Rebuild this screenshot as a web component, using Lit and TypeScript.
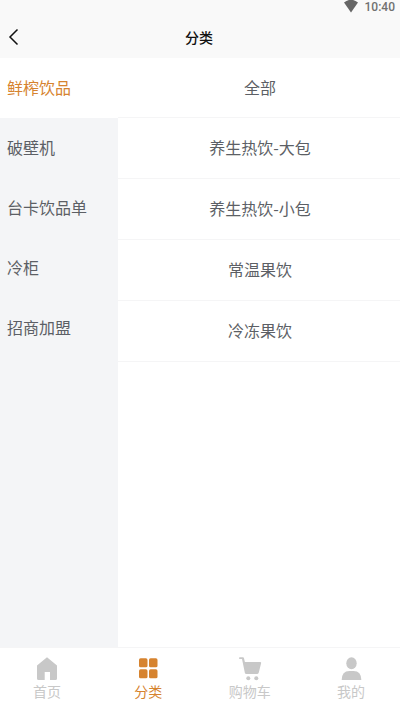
import { LitElement, html, css, svg } from "lit";
import { customElement, state } from "lit/decorators.js";
import { classMap } from "lit/directives/class-map.js";

const categories = [
  { name: "鲜榨饮品", items: ["全部", "养生热饮-大包", "养生热饮-小包", "常温果饮", "冷冻果饮"] },
  { name: "破壁机", items: ["全部"] },
  { name: "台卡饮品单", items: ["全部"] },
  { name: "冷柜", items: ["全部"] },
  { name: "招商加盟", items: ["全部"] },
];

const tabs = [
  {
    label: "首页",
    icon: svg`<path d="M12 0.3 L22 8.5 V21.5 Q22 23 20.5 23 H15 V15 H9.7 V23 H3.5 Q2 23 2 21.5 V8.5 Z"/>`,
  },
  {
    label: "分类",
    icon: svg`<rect x="3" y="1.3" width="8.5" height="9" rx="1.6"/><rect x="13" y="1.3" width="8.5" height="9" rx="1.6"/><rect x="3" y="12.3" width="8.5" height="9" rx="1.6"/><rect x="13" y="12.3" width="8.5" height="9" rx="1.6"/>`,
  },
  {
    label: "购物车",
    icon: svg`<path d="M1.8 0.3 H5 Q5.8 0.3 6 1.2 L6.9 5 H22.1 Q23.5 5 23.1 6.2 L20.8 15.6 Q20.5 17 19.3 17 H8.2 Q7.2 17 6.9 16 L4 2 H1.8 Q1 2 1 1.2 Q1 0.3 1.8 0.3 Z"/><circle cx="10.3" cy="21.2" r="2"/><circle cx="18.3" cy="21.2" r="2"/>`,
  },
  {
    label: "我的",
    icon: svg`<ellipse cx="12.5" cy="6.2" rx="5.2" ry="6"/><path d="M2.7 23 Q2.7 14 10.5 14 H14.5 Q22.3 14 22.3 23 Z"/>`,
  },
];

@customElement("app-root")
export class AppRoot extends LitElement {
  @state() private category = 0;
  @state() private tab = 1;

  static styles = css`
    :host {
      display: flex;
      flex-direction: column;
      min-height: 100vh;
      background: #fff;
      color: #5c5f65;
      font-family: "Noto Sans CJK SC", sans-serif;
      font-size: 16px;
    }
    button {
      border: 0;
      margin: 0;
      padding: 0;
      background: none;
      color: inherit;
      font: inherit;
      cursor: pointer;
    }
    .top {
      background: #f9f9f9;
    }
    .status {
      display: flex;
      justify-content: flex-end;
      align-items: flex-start;
      gap: 7px;
      height: 16px;
      padding-right: 5px;
      font: 500 12px/14px Roboto, sans-serif;
      color: #707070;
    }
    .wifi {
      width: 14px;
      height: 14px;
      fill: #666;
    }
    .bar {
      display: grid;
      grid-template-columns: 40px 1fr 40px;
      align-items: center;
      height: 42px;
      padding-right: 2px;
      color: #111;
    }
    .back {
      display: flex;
      align-items: center;
      height: 40px;
      padding-left: 8px;
    }
    .back svg {
      width: 12px;
      height: 18px;
      fill: none;
      stroke: #111;
      stroke-width: 1.5;
    }
    h1 {
      margin: 0;
      text-align: center;
      font-size: 14px;
      line-height: 20px;
      font-weight: 500;
    }
    .body {
      flex: 1;
      display: grid;
      grid-template-columns: 118px 1fr;
    }
    .side {
      display: flex;
      flex-direction: column;
      background: #f4f5f7;
    }
    .category {
      height: 60px;
      padding: 0 0 2px 7px;
      text-align: left;
    }
    .category.on {
      background: #fff;
      color: #d6832f;
    }
    .item {
      display: block;
      box-sizing: border-box;
      width: 100%;
      height: 61px;
      padding: 0 0 2px 2px;
      border-bottom: 1px solid #f5f5f6;
    }
    .item:first-child {
      height: 60px;
    }
    .tabs {
      display: flex;
      justify-content: space-between;
      box-sizing: border-box;
      height: 63px;
      padding: 9px 21px 0 19px;
      border-top: 1px solid #f5f5f6;
    }
    .tab {
      display: flex;
      flex-direction: column;
      align-items: center;
      width: 56px;
      font-size: 14px;
      line-height: 20px;
      color: #c8c8c8;
    }
    .tab svg {
      width: 24px;
      height: 24px;
      fill: currentColor;
    }
    .tab.on {
      color: #d6832f;
    }
  `;

  render() {
    return html`
      <header class="top">
        <div class="status">
          <svg class="wifi" viewBox="0 0 14 14" aria-hidden="true">
            <path d="M0 2.5 Q7 -3 14 2.5 L7 12.5 Z" />
          </svg>
          <span>10:40</span>
        </div>
        <div class="bar">
          <button class="back" aria-label="返回">
            <svg viewBox="0 0 12 18"><path d="M9.5 1.5 L2 9 L9.5 16.5" /></svg>
          </button>
          <h1>分类</h1>
        </div>
      </header>
      <main class="body">
        <nav class="side">
          ${categories.map(
            (c, i) => html`<button
              class=${classMap({ category: true, on: i === this.category })}
              @click=${() => (this.category = i)}
            >${c.name}</button>`
          )}
        </nav>
        <section>
          ${categories[this.category].items.map((name) => html`<button class="item">${name}</button>`)}
        </section>
      </main>
      <nav class="tabs">
        ${tabs.map(
          (t, i) => html`<button
            class=${classMap({ tab: true, on: i === this.tab })}
            @click=${() => (this.tab = i)}
          >
            <svg viewBox="0 0 24 24" aria-hidden="true">${t.icon}</svg>
            <span>${t.label}</span>
          </button>`
        )}
      </nav>
    `;
  }
}
